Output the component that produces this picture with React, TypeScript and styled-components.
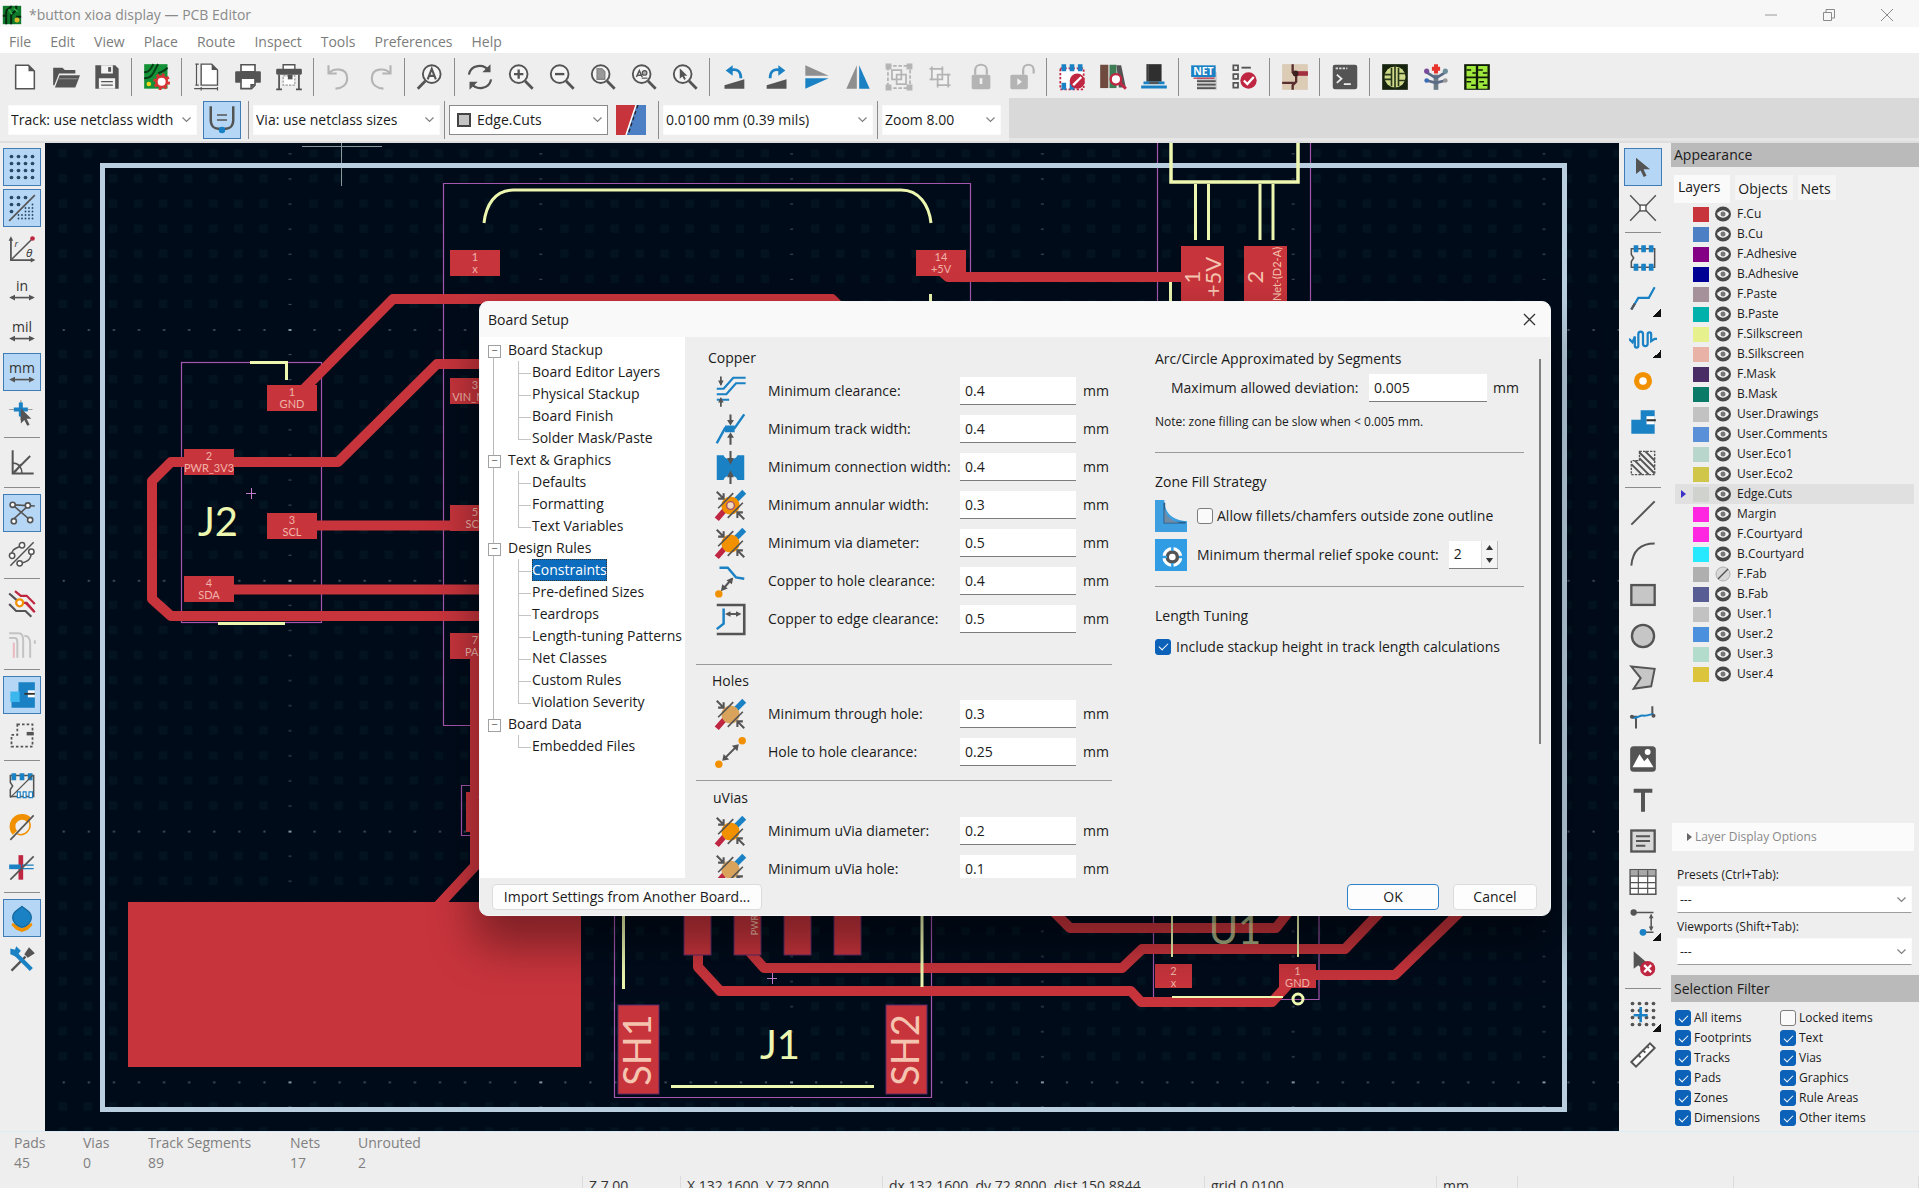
import React, { useState } from 'react';
import styled, { createGlobalStyle, css } from 'styled-components';

const D = '#545454';
const B = '#1a81c4';
const R = '#bf2641';
const O = '#f29100';
const G = '#b4b4b4';
const COPPER = '#c8343c';
const SILK = '#eef7b0';

const Global = createGlobalStyle`
  * { box-sizing: border-box; }
  html, body { margin: 0; height: 100%; overflow: hidden; }
  body { font-family: "Open Sans", "Noto Sans", sans-serif; font-size: 14px; line-height: 20px; color: #1b1b1b; background: #eeeeee; }
  #root { height: 100%; }
  button, input, select { font: inherit; color: inherit; margin: 0; }
`;

/* ---------- icons ---------- */

const Mag = ({ flip, children }: { flip?: boolean; children?: React.ReactNode }) => (
  <g fill="none" stroke={D}>
    <circle cx={flip ? 13.5 : 10} cy="9.5" r="7.6" strokeWidth="1.6" fill="#f5f5f5" />
    <path d={flip ? 'M8 15.5 1.5 22' : 'M15.5 15.5 22 22'} strokeWidth="2.4" />
    {children}
  </g>
);

const Via = ({ hole, plain }: { hole?: boolean; plain?: boolean }) => (
  <g>
    <path d="M2 22 9 14" stroke={R} strokeWidth="4" />
    <path d="M15 9 22 2" stroke={B} strokeWidth="4" />
    <circle cx="12" cy="12" r="6.6" fill={plain ? '#d9a35c' : O} />
    {hole && <circle cx="12" cy="12" r="2.8" fill="#f3d9bb" stroke="#a3506a" strokeWidth="1" />}
    <path d="M3 14 14 3M10 21 21 10" stroke={D} strokeWidth="1.2" />
    <path d="M2 2 7 7M7 3v4H3M22 22l-5-5M17 21v-4h4" stroke={D} strokeWidth="1.5" fill="none" />
  </g>
);

const dots = (xs: number[], ys: number[], r: number, c: string) =>
  xs.flatMap((x) => ys.map((y) => <circle key={`${x}-${y}`} cx={x} cy={y} r={r} fill={c} />));

const Fold = ({ children }: { children?: React.ReactNode }) => (
  <g>
    <path d="M4 2h11l5 5v15H4z" fill="#fff" stroke={D} strokeWidth="1.3" />
    <path d="M15 2v5h5z" fill={D} />
    {children}
  </g>
);

const Units = ({ label }: { label: string }) => (
  <g>
    <text x="12" y="13" fontSize="12" textAnchor="middle" fill="#333" fontFamily="Open Sans, sans-serif">{label}</text>
    <path d="M3 18.5h18" stroke={D} strokeWidth="1.4" />
    <path d="M1 18.5l5-2.4v4.8zM23 18.5l-5-2.4v4.8z" fill={D} />
  </g>
);

const icons: Record<string, React.ReactNode> = {
  new: <Fold />,
  open: <g fill={D}><path d="M1 4h8l2 2h9v3H6L2 19H1z" /><path d="M6.500 10.500H24L20 21H2.500z" /><path d="M5 13.500h17" stroke="#8a8a8a" /></g>,
  save: <g><path d="M2 2h17l3 3v17H2z" fill={D} /><path d="M7 2h10v7H7zM5 13h14v9H5z" fill="#f2f2f2" /><path d="M13 3.500h2.500v4H13z" fill={D} /><path d="M7 16h10M7 19h10" stroke={D} /></g>,
  pcb: <g><rect x="1" y="1" width="20" height="21" fill="#149237" /><path d="M1 8c6 0 6-5 8-7M1 13c8 0 8-6 12-12M13 9c3-2 6-2 8-5" stroke="#073d17" strokeWidth="1.700" fill="none" /><circle cx="5" cy="18" r="2" fill="#f3d51b" /><circle cx="16" cy="16" r="4.500" fill="#fff" stroke="#d83434" strokeWidth="2.200" /><circle cx="16" cy="16" r="6" fill="none" stroke="#d83434" strokeWidth="2.400" strokeDasharray="2.400 2.300" /></g>,
  page: <g><path d="M7 1h9l5 5v13H7z" fill="#fff" stroke={D} strokeWidth="1.200" /><path d="M16 1v5h5z" fill={D} /><path d="M3 1v18M1 22h20M2 1h3M2 19h3M7 20.500v3M21 20.500v3" stroke={D} /></g>,
  print: <g><path d="M6 1.500h12v6H6z" fill="#fff" stroke={D} strokeWidth="1.400" /><rect x="1" y="7" width="22" height="10" rx="1" fill={D} /><path d="M6 13h12v6l-3 3H6z" fill="#fff" stroke={D} strokeWidth="1.400" /><path d="M18 18h-4v4z" fill={D} /></g>,
  plot: <g><path d="M7 1.500h10v5H7z" fill="#fff" stroke={D} strokeWidth="1.200" /><rect x="1" y="5" width="22" height="5" rx="1" fill={D} /><path d="M3.500 10v12M20.500 10v12M1 22.500h5M18 22.500h5" stroke={D} strokeWidth="1.500" /><path d="M7 11h10v8H7z" fill="#fff" stroke="#999" strokeDasharray="2 1" /><path d="M11 10h4v4h-4z" fill={D} /></g>,
  undo: <path d="M3 2v7h7M3.500 8.500C7 4.500 19 3.500 19 13c0 6-5 9-10 9" fill="none" stroke={G} strokeWidth="1.800" />,
  redo: <path d="M21 2v7h-7M20.500 8.500C17 4.500 5 3.500 5 13c0 6 5 9 10 9" fill="none" stroke={G} strokeWidth="1.800" />,
  find: <Mag flip><path d="M10 14l3.500-9 3.500 9M11 11h5" strokeWidth="1.800" /></Mag>,
  refresh: <g fill="none" stroke={D} strokeWidth="1.900"><path d="M2.500 10C4 1.500 15 0 20 7M21.500 14C20 22.500 9 24 4 17" /><path d="M21 1v7h-7zM3 23v-7h7z" fill={D} stroke="none" /></g>,
  zin: <Mag><path d="M10 5.500v8M6 9.500h8" strokeWidth="2" /></Mag>,
  zout: <Mag><path d="M6 9.500h8" strokeWidth="2" /></Mag>,
  zfit: <Mag><path d="M7 5h4l2.500 2.500v6.500H7z" fill="#999" stroke="#888" strokeWidth="1.300" /></Mag>,
  zobj: <Mag><path d="M5.500 12 8 6.500l2.500 5.500M6.500 10.500h3" strokeWidth="1.300" /><circle cx="12.500" cy="8.500" r="2" fill="#aaa" /><path d="M10 13h5" /></Mag>,
  zsel: <Mag><path d="M7.500 4.500v9l2.200-2 1.800 3 1.200-1-1.500-2.500H14z" fill={D} stroke="none" /></Mag>,
  rotl: <g><path d="M3 22v-3l17-5v8z" fill={D} /><path d="M9 6c5-1 8 1 8 7" fill="none" stroke={B} strokeWidth="2.400" /><path d="M4 6.500 10 2v9z" fill={B} /></g>,
  rotr: <g><path d="M21 22v-8L4 19v3z" fill={D} /><path d="M15 6c-5-1-8 1-8 7" fill="none" stroke={B} strokeWidth="2.400" /><path d="M20 6.500 14 2v9z" fill={B} /></g>,
  flipv: <g><path d="M2 2v9h20z" fill="#8f8f8f" /><path d="M2 22v-9h20z" fill={B} /></g>,
  fliph: <g><path d="M2 22h9V2z" fill="#8f8f8f" /><path d="M22 22h-9V2z" fill={B} /></g>,
  group: <g fill="none" stroke={G}><rect x="2.500" y="2.500" width="19" height="19" strokeWidth="1.500" strokeDasharray="3 1.500" /><path d="M6 6h8v8H6zM10 10h8v8h-8z" strokeWidth="1.500" fill="#f2f2f2" /><path d="M1 1h4v4H1zM19 1h4v4h-4zM1 19h4v4H1zM19 19h4v4h-4z" fill={G} /></g>,
  ungroup: <g fill="none" stroke={G} strokeWidth="1.500"><path d="M5 5h9v9H5zM10 10h9v9h-9z" fill="#f2f2f2" /><path d="M3 5h3M5 3v3M14 3v3M3 14h3M19 18v3M18 19h3M10 18v3M18 10h3" /></g>,
  lock: <g><rect x="4" y="10" width="16" height="12.500" rx="1.500" fill={G} /><path d="M7 10V6c0-6 10-6 10 0v4" fill="none" stroke={G} strokeWidth="1.900" /><path d="M12 13v5" stroke="#f2f2f2" strokeWidth="2.200" /></g>,
  unlock: <g><rect x="2" y="10" width="15" height="12.500" rx="1.500" fill={G} /><path d="M13 10V6c0-6 9-6 9 0v3" fill="none" stroke={G} strokeWidth="1.900" /><path d="M8 13l4 3-4 3z" fill="#f2f2f2" /></g>,
  fpedit: <g><path d="M2 4.500h20v18H2z" fill="#fff" stroke={R} strokeWidth="1.500" strokeDasharray="2 1.500" /><path d="M3 1h4v6H3zM10 1h4v6h-4zM17 1h4v6h-4zM3 17h4v6H3zM10 17h4v6h-4z" fill={B} /><circle cx="16.500" cy="15.500" r="6.500" fill={R} /><path d="M13 19l7-7" stroke="#fff" strokeWidth="2" /></g>,
  fpview: <g><path d="M1 1.500h7v20H1z" fill="#6e4a3f" /><path d="M9 1.500h6v20H9z" fill="#3e7c55" /><path d="M15 2h4l4 19h-6z" fill={D} /><circle cx="14.500" cy="14" r="4.500" fill="#fff" stroke={R} strokeWidth="2" /><path d="M18 17l5 5" stroke={R} strokeWidth="2.500" /></g>,
  model: <g><path d="M5.500 1h13v15h-13z" fill="#2f2f2f" /><path d="M7 1v15" stroke="#555" /><path d="M3 17h18M1 20.500h22" stroke={B} strokeWidth="2.500" /><path d="M8 16h8v2H8z" fill={D} /></g>,
  net: <g><rect x="6" y="8" width="17" height="15" fill="#c9c9c9" /><path d="M1 2h21v10H1z" fill={B} /><text x="11.500" y="10.500" fontSize="9" fontWeight="700" textAnchor="middle" fill="#fff" fontFamily="Open Sans, sans-serif">NET</text><path d="M6 15.500h16M6 18.500h16M6 21.500h16" stroke={D} strokeWidth="1.500" /><path d="M3 13h18" stroke={R} /></g>,
  drc: <g fill="none"><path d="M2 2h4v4H2zM2 9.500h4v4H2zM2 17h4v4H2z" stroke={D} strokeWidth="1.500" /><path d="M9 4h8" stroke={D} strokeWidth="1.600" /><circle cx="15" cy="15" r="7" fill={R} /><path d="M11 15l3 3 5.500-6" stroke="#fff" strokeWidth="2" /></g>,
  sch: <g><rect x="1" y="1" width="22" height="22" fill="#dccbb5" /><path d="M10 1v7l3 2v6l-3 3v4M1 17h10M13 9h10" fill="none" stroke="#5a2e2e" strokeWidth="2" /><path d="M14 7h9v4h-9z" fill="#a3303f" /><circle cx="12.500" cy="9" r="2.500" fill="#3b2020" /></g>,
  console: <g><rect x="1.500" y="1.500" width="21" height="21" rx="2" fill={D} /><path d="M4 4.500h10" stroke="#ddd" strokeWidth="1.500" strokeDasharray="2 1" /><path d="M5 10l4 3.500L5 17M11 18h6" stroke="#eee" strokeWidth="1.500" fill="none" /></g>,
  bid: <g><rect x="1" y="1" width="22" height="22" fill="#16230f" /><circle cx="12" cy="12" r="9" fill="#cfd98a" /><path d="M12 2v20M9 4v16M15 4v16M3 10h6M3 14h6M15 9h6M15 15h6" stroke="#27381b" strokeWidth="1.400" /></g>,
  tree: <g><path d="M12 10v13" stroke="#6b7c86" strokeWidth="4" /><path d="M12 13 4 8M12 13l8-5M12 17l-8-2M12 17l8-2" stroke="#5b6b86" strokeWidth="2.400" /><path d="M12 1v8M8.500 5h7" stroke="#e8322c" strokeWidth="3.400" /><circle cx="4" cy="7" r="2.200" fill="#7a4a9a" /><circle cx="20" cy="7" r="2.200" fill="#6c8d9a" /><circle cx="4" cy="15" r="2" fill="#3a6cb4" /><circle cx="20" cy="15" r="2" fill="#999" /></g>,
  panel: <g><path d="M1 1h22v22H1z" fill="#0f1a08" /><path d="M3 2.500h8v9H3zM13 2.500h8v9h-8zM3 13h8v9H3zM13 13h8v9h-8z" fill="#9fe83c" /><path d="M3 6h4M8 8.500h3M13 6h4M17 8.500h4M3 16h4M7 19h4M14 16h4M17 19h4" stroke="#0f1a08" strokeWidth="1.300" /></g>,
  netwidth: <g fill="none"><path d="M3 1v11c0 5 3 7 6 7h6c3 0 6-2 6-7V1" stroke={D} strokeWidth="2" /><path d="M8 8h8M8 12h8" stroke={D} strokeWidth="1.200" /><circle cx="12" cy="20" r="2.600" fill={B} /></g>,
  layerpair: <g><path d="M0 0h24v24H0z" fill={COPPER} /><path d="M16 0h8v24H8z" fill="#4d7fc4" /><path d="M16 0 8 24" stroke="#fff" strokeWidth="1.200" /><path d="M17.500 0 9.500 24" stroke="#222" strokeWidth="1" strokeDasharray="3 2" /></g>,
  grid: <g>{dots([3, 9, 15, 21], [3, 9, 15, 21], 1.6, '#2c4a66')}</g>,
  gridov: <g>{dots([3, 9, 15], [3], 1.6, '#2c4a66')}{dots([3, 9], [9], 1.6, '#2c4a66')}{dots([3], [15], 1.6, '#2c4a66')}{dots([9, 12, 15, 18, 21], [18, 21], 0.8, '#2c4a66')}{dots([15, 18, 21], [12, 15], 0.8, '#2c4a66')}{dots([21], [9], 0.8, '#2c4a66')}<path d="M1 23 23 1" stroke={D} strokeWidth="1.400" /></g>,
  polar: <g fill="none" stroke={D}><path d="M2.500 3v18.500H21" strokeWidth="1.500" /><path d="M2.500 1 .5 5h4zM23.500 21.500l-4-2v4z" fill={D} stroke="none" /><path d="M3 21 20 4" strokeWidth="1.300" /><circle cx="21" cy="3" r="2" fill={R} stroke="none" /><text x="15.500" y="19" fontSize="10" fontStyle="italic" fill="#333" stroke="none" fontFamily="Open Sans, sans-serif">θ</text><text x="5.500" y="10" fontSize="8" fontStyle="italic" fill="#333" stroke="none" fontFamily="Open Sans, sans-serif">r</text></g>,
  inch: <Units label="in" />,
  mil: <Units label="mil" />,
  mm: <Units label="mm" />,
  cursor: <g><path d="M1 9h20M11 1v17" stroke="#9a9a9a" /><path d="M11 3v12M5 9h12" stroke={B} strokeWidth="3.400" /><path d="M11 8v13l3-3 2.500 5 2-1-2.500-5h4z" fill={D} /></g>,
  angle: <g fill="none" stroke={D}><path d="M4 1v20H22" strokeWidth="1.700" /><path d="M4 21 19 6" strokeWidth="1.600" /><path d="M4 12c5 0 8 4 8 9M6 20l5-7" strokeWidth="1.300" /></g>,
  rats: <g fill="#fff" stroke={D} strokeWidth="1.400"><path d="M5 6 19 18M4 18 17 6M5 5l18 1" /><circle cx="4" cy="5" r="2.200" /><circle cx="17" cy="5.500" r="2.200" /><circle cx="5" cy="19" r="2.200" /><circle cx="19" cy="18" r="2.200" /></g>,
  ratc: <g fill="#fff" stroke={D} strokeWidth="1.300"><path d="M2 22 22 2" /><path d="M3 14c0-8 5-6 9-10M20 10c0 8-5 9-9 10" fill="none" /><circle cx="3.500" cy="13.500" r="2.300" /><circle cx="12" cy="4.500" r="2.300" /><circle cx="20" cy="10" r="2.300" /><circle cx="10" cy="20" r="2.300" /></g>,
  netcol: <g fill="none" strokeWidth="1.900"><path d="M6 1l5 4h5l7 7M15 11l8 8" stroke={R} /><path d="M1 3l8 7M1 12l6 6h8l5 5" stroke={D} /><path d="M10 11h6l6 7" stroke={R} /><circle cx="10" cy="11" r="3" fill="#fff" stroke={O} /></g>,
  highlight: <g fill="none" stroke="#c3c3c3" strokeWidth="1.700"><path d="M1 2h8c4 0 4 4 4 7v14M1 6h5c2 0 2 2 2 5v12M14 4c4 0 5 3 5 7v12M23 8v3" /><path d="M5 10v13" stroke="#eab9c0" /></g>,
  zone: <g><path d="M9 1h14v22H3V10h6z" fill={B} /><path d="M2 9h8v9H2z" fill="#3cb7ee" /><path d="M23 8h-6v6h6z" fill="#fff" /><path d="M14 11h9" stroke="#333" strokeWidth="1.600" /></g>,
  zoneout: <g><path d="M8 2h13v19H3V11h5z" fill="none" stroke={D} strokeWidth="1.500" strokeDasharray="2.200 1.800" /><path d="M16 10h6" stroke={D} strokeWidth="3" /></g>,
  padskt: <g fill="none"><path d="M2 3h20v18H2V15l2-3-2-3z" stroke={D} strokeWidth="1.300" /><path d="M3 1h4v6H3zM10 1h4v6h-4zM17 1h4v6h-4z" fill={B} /><path d="M8 17h2.500v5H8zM13 17h2.500v5H13zM18 17h3v5h-3z" stroke={B} fill="#fff" /><path d="M2 22 21 3" stroke={D} /></g>,
  viaskt: <g fill="none"><path d="M6 17A8 8 0 1 1 18 6" stroke={O} strokeWidth="5" /><path d="M18 7a8 8 0 0 1-10 11" stroke={O} strokeWidth="1.300" /><path d="M2 23 22 2" stroke={D} strokeWidth="1.400" /></g>,
  trkskt: <g fill="none"><path d="M11 1v21" stroke={R} strokeWidth="4" /><path d="M1 11h10" stroke={B} strokeWidth="4" /><path d="M12 9.500h10M12 12.500h10" stroke={B} /><path d="M2 22 22 2" stroke={D} strokeWidth="1.400" /></g>,
  contrast: <g><path d="M4 16l8 5 8-5 1 2-4 4-5 2-5-2-4-4z" fill={O} /><path d="M12 2c5 4 8 5 8 10 0 4-4 7-8 8-4-1-8-4-8-8 0-5 3-6 8-10z" fill={B} stroke="#14679c" /></g>,
  tools: <g><path d="M3 22 15 10" stroke={D} strokeWidth="2" /><path d="M14 8l4-6 5 5-6 4z" fill={D} /><path d="M6 7l14 14" stroke={B} strokeWidth="3.600" /><path d="M2 3l4 1 1-3 4 4-4 5-5-2z" fill={B} /></g>,
  select: <path d="M6 4v14l4-3 2.500 5.500 2.500-1-2.500-5.500H18z" fill={D} />,
  local: <g fill="none" stroke={D} strokeWidth="1.200"><path d="M1 1l9 9.500M14 10.500l9-9.500M1 23l9-9.500M14 13.500l9 9.500" /><rect x="9.500" y="9.500" width="5" height="5" fill="#fff" /></g>,
  fp: <g fill="none"><path d="M2 4h20v16H2v-5l2-3-2-3z" stroke={D} strokeWidth="1.300" /><path d="M4 1h4v6H4zM10.500 1h4v6h-4zM17 1h4v6h-4zM4 17h4v6H4zM10.500 17h4v6h-4zM17 17h4v6h-4z" fill={B} /></g>,
  route: <g fill="none"><path d="M2 21 8 11h9l5-9" stroke={B} strokeWidth="1.900" /><path d="M2 21l3-5" stroke={D} strokeWidth="2" /></g>,
  tune: <path d="M0 11l3 3 2-5v8c0 2 3 2 3 0V7c0-3 4-3 4 0v8c0 3 4 3 4 0V7c0-2 3-2 3 0v6l3-2h2" fill="none" stroke={B} strokeWidth="1.900" />,
  via: <circle cx="12" cy="12" r="5.500" fill="#fff" stroke={O} strokeWidth="4.500" />,
  addzone: <g><path d="M10 2h12v20H2V10h8z" fill={B} /><path d="M22 7h-7v7h7z" fill="#fff" /><path d="M15 10.500h8" stroke="#333" strokeWidth="1.800" /></g>,
  rule: <g fill="none" stroke={D} strokeWidth="1.700"><path d="M9 2h13v20H2V10h7z" strokeWidth="1.200" strokeDasharray="2 1" /><path d="M9 3l13 13M14 2l8 8M5 10l12 12M2 13l9 9M9 8l13 13" /></g>,
  line: <path d="M2 22 22 2" stroke={D} strokeWidth="1.700" />,
  arc: <path d="M2 22C3 10 9 3 22 3" fill="none" stroke={D} strokeWidth="1.700" />,
  rect: <rect x="2" y="3.500" width="20" height="17" fill="#c6c6c6" stroke={D} strokeWidth="2" />,
  circle: <circle cx="12" cy="12" r="9.500" fill="#c6c6c6" stroke={D} strokeWidth="2" />,
  poly: <path d="M2 3l20 2-3 15-15 2 6-9z" fill="#c6c6c6" stroke={D} strokeWidth="1.700" />,
  bezier: <g fill="none"><path d="M2 11h5M20 9V2M6 12v9" stroke={D} strokeWidth="1.700" /><path d="M3 12c7 0 5-3 10-2 5 0 6-2 8-1" stroke={B} strokeWidth="1.700" /><circle cx="2.500" cy="11" r="1.700" fill={D} /><circle cx="21" cy="10" r="1.700" fill={D} /></g>,
  image: <g><rect x="1" y="1" width="22" height="22" rx="3" fill={D} /><path d="M3 19 9 8l4 6 3-3 5 8z" fill="#fff" /><circle cx="16" cy="6" r="2.500" fill="#fff" /></g>,
  text: <path d="M4 4h16M12 4v18" fill="none" stroke={D} strokeWidth="3.400" />,
  textbox: <g fill="none" stroke={D}><rect x="2" y="3" width="20" height="18" strokeWidth="2" fill="#d8d8d8" /><path d="M6 8h12M6 12h12M6 16h8" strokeWidth="1.700" /></g>,
  table: <g fill="none" stroke={D}><rect x="1" y="1.500" width="22" height="21" strokeWidth="1.300" fill="#fff" /><path d="M1.500 2h21v5h-21z" fill="#a8a8a8" stroke="none" /><path d="M1 7h22M1 12.500h22M1 17.500h22M8 2v20M16 2v20" /></g>,
  dim: <g fill="none" stroke={D}><path d="M4 3h17M13 20h8M19 5v13" strokeWidth="1.300" /><path d="M19 4l2 4h-4zM19 19l2-4h-4z" fill={D} stroke="none" /><circle cx="4" cy="3" r="2.700" fill={D} stroke="none" /><circle cx="12" cy="20" r="2.900" fill={B} stroke="none" /></g>,
  del: <g><path d="M4 1v15l4-3 8 8 2-8z" fill={D} /><circle cx="16" cy="16" r="6.500" fill={R} /><path d="M13 13l6 6M19 13l-6 6" stroke="#fff" strokeWidth="2" /></g>,
  origin: <g>{dots([3, 9, 15, 21], [3, 9, 15, 21], 1.6, D)}<path d="M10 6v13M4 13h12" stroke={B} strokeWidth="2.200" /></g>,
  ruler: <g fill="#fff" stroke={D} strokeWidth="1.700"><path d="M2 18 18 2l4 4L6 22z" /><path d="M8 12l2 2M12 8l2 2M16 5l1 1" /></g>,
  clearance: <g fill="none"><path d="M2 10h5l7-8h9M2 14h7l7-8h7M2 18h9" stroke={B} strokeWidth="1.600" /><path d="M5 1v6M5 17v6" stroke={D} strokeWidth="1.300" /><path d="M5 8 3 4h4zM5 16l-2 4h4z" fill={D} /></g>,
  trackw: <g fill="none"><path d="M2 22 8 11h7l7-10" stroke={B} strokeWidth="1.800" /><path d="M8 9h7v5H8z" fill={B} /><path d="M12 1v5M12 23v-6" stroke={D} strokeWidth="1.500" /><path d="M12 9l-2.500-4h5zM12 14l-2.500 4h5z" fill={D} /></g>,
  connw: <g><path d="M2 3h5c1 4 9 4 10 0h5v18h-5c-1-4-9-4-10 0H2z" fill={B} /><path d="M12 0v6M12 24v-6" stroke={D} strokeWidth="1.500" /><path d="M12 10 9.500 5h5zM12 14l-2.500 5h5z" fill={D} /></g>,
  annular: <Via hole />,
  viadia: <Via />,
  hole: <Via plain />,
  cuhole: <g fill="none"><path d="M4 2h6l6 7 6 1" stroke={B} strokeWidth="1.700" /><path d="M7 17l6-7" stroke={D} strokeWidth="1.500" /><path d="M14 9l-1 5-4-3zM5 19l1-5 4 3z" fill={D} /><circle cx="3.500" cy="21" r="2.700" fill={O} /></g>,
  cuedge: <g fill="none"><path d="M2 1.500h20v21H2" stroke={D} strokeWidth="1.900" /><path d="M7 4v11l-5 4" stroke={B} strokeWidth="1.800" /><path d="M10 8h8" stroke={D} strokeWidth="1.400" /><path d="M8 8l4-2v4zM20 8l-4-2v4z" fill={D} /></g>,
  holehole: <g fill="none"><path d="M7 17 17 7" stroke={D} strokeWidth="1.500" /><path d="M18 6l-1 5-4-4zM6 18l1-5 4 4z" fill={D} /><circle cx="3.500" cy="20.500" r="2.700" fill={O} /><circle cx="20.500" cy="3.500" r="2.700" fill={O} /></g>,
  fillet: <g><path d="M0 0h7c0 10 6 15 17 16v8H0z" fill="#3d9fe0" /><path d="M7 2v15h16" fill="none" stroke="#2b5b86" strokeWidth="1.300" /><path d="M7 6c1 6 5 10 12 11H7z" fill="#6f8ba6" /></g>,
  thermal: <g><path d="M0 0h24v24H0z" fill="#2f9ce4" /><circle cx="13" cy="13.500" r="7.500" fill="#fff" /><circle cx="13" cy="13.500" r="3.800" fill="#fff" stroke={D} strokeWidth="2.600" /><path d="M13 5v4M13 18v4M5 13.500h4M18 13.500h4" stroke="#2f9ce4" strokeWidth="1.800" /></g>,
};

const flyouts = new Set(['route', 'tune', 'dim', 'origin']);

const Icon = ({ name, size = 28 }: { name: string; size?: number }) => (
  <svg width={size} height={size} viewBox="0 0 24 24" aria-hidden="true">{icons[name]}</svg>
);

/* ---------- window frame ---------- */

const Window = styled.div`
  height: 100vh;
  display: flex;
  flex-direction: column;
  overflow: hidden;
  position: relative;
`;

const TitleBar = styled.header`
  height: 27px;
  flex: none;
  display: flex;
  align-items: center;
  gap: 7px;
  padding: 2px 25px 0 2px;
  background: #f7f7f7;
  color: #8a8a8a;
`;

const WindowButtons = styled.div`
  margin-left: auto;
  display: flex;
  gap: 44px;
`;

const PlainButton = styled.button`
  border: 0;
  padding: 0;
  background: none;
  display: flex;
`;

const MenuBar = styled.nav`
  height: 26px;
  flex: none;
  display: flex;
  align-items: center;
  gap: 19px;
  padding: 4px 9px 0;
  background: #fff;
  color: #7c7c7c;
`;

const ToolBar = styled.div`
  height: 45px;
  flex: none;
  display: flex;
  align-items: center;
  padding: 2px 4px 0;
`;

const SideBar = styled.div<{ $width: number }>`
  width: ${(p) => p.$width}px;
  flex: none;
  display: flex;
  flex-direction: column;
  align-items: center;
  padding: 3px 2px 0 0;
`;

const Slot = styled.div`
  width: 41px;
  height: 41px;
  flex: none;
  display: flex;
  align-items: center;
  justify-content: center;
`;

const ToolButton = styled.button<{ $on?: boolean; $fly?: boolean }>`
  width: 38px;
  height: 38px;
  padding: 0;
  display: flex;
  align-items: center;
  justify-content: center;
  background: ${(p) => (p.$on ? '#b5d7f5' : 'transparent')};
  border: 1px solid ${(p) => (p.$on ? '#3f7bb5' : 'transparent')};
  ${(p) => p.$fly && css`
    background: linear-gradient(135deg, transparent 50%, #111 50%) right bottom / 8px 8px no-repeat;
  `}
`;

const VSep = styled.div`
  width: 1px;
  height: 38px;
  margin: 0 4px;
  flex: none;
  background: #8c8c8c;
`;

const HSep = styled.div`
  width: 36px;
  height: 1px;
  margin: 4px 0;
  flex: none;
  background: #8c8c8c;
`;

const Tools = ({ names, on = [], vertical }: { names: string; on?: string[]; vertical?: boolean }) => (
  <>
    {names.split(' ').map((n, i) =>
      n === '|' ? (
        vertical ? <HSep key={i} /> : <VSep key={i} />
      ) : (
        <Slot key={i}>
          <ToolButton type="button" aria-label={n} $on={on.includes(n)} $fly={flyouts.has(n)}>
            <Icon name={n} />
          </ToolButton>
        </Slot>
      ),
    )}
  </>
);

const AuxBar = styled.div`
  height: 45px;
  flex: none;
  display: flex;
  align-items: center;
  padding-left: 8px;
  border-bottom: 2px solid #dedede;
`;

const AuxFiller = styled.div`
  flex: 1;
  height: 100%;
  margin-left: 8px;
  background: #d9d9d9;
  border-bottom: 3px solid #e6e6e6;
`;

const SelectBox = styled.div<{ $width?: number; $framed?: boolean }>`
  position: relative;
  width: ${(p) => (p.$width ? `${p.$width}px` : '100%')};
  height: ${(p) => (p.$width ? 30 : 27)}px;
  background: #fff;
  border: 1px solid ${(p) => (p.$framed ? '#8a8a8a' : '#fafafa')};
  border-bottom-color: ${(p) => (p.$width ? '' : '#9d9d9d')};
  select {
    width: 100%;
    height: 100%;
    appearance: none;
    border: 0;
    background: transparent;
    padding: 0 20px 0 ${(p) => (p.$framed ? 27 : 2)}px;
    outline: 0;
  }
`;

const Chevron = styled.svg`
  position: absolute;
  right: 5px;
  top: 50%;
  margin-top: -3px;
  pointer-events: none;
`;

const LayerChip = styled.span`
  position: absolute;
  left: 7px;
  top: 7px;
  width: 14px;
  height: 14px;
  background: #c4c4c4;
  border: 2px solid #444;
`;

const Select = ({ label, value, width, chip }: { label: string; value: string; width?: number; chip?: boolean }) => (
  <SelectBox $width={width} $framed={chip}>
    {chip && <LayerChip />}
    <select aria-label={label} defaultValue={value}>
      <option>{value}</option>
    </select>
    <Chevron width="9" height="6" viewBox="0 0 9 6"><path d="M.5.5l4 4 4-4" fill="none" stroke="#808080" strokeWidth="1.200" /></Chevron>
  </SelectBox>
);

const ToggleButton = styled(ToolButton)`
  margin: 0 3px 0 6px;
  background: #b5d7f5;
  border-color: #3f7bb5;
`;

const PairButton = styled(PlainButton)`
  margin: 0 8px;
`;

const Main = styled.main`
  flex: 1;
  min-height: 0;
  display: flex;
`;

const Canvas = styled.div`
  flex: 1;
  min-width: 0;
  background: #000b1a;
  svg { display: block; width: 100%; height: 100%; }
`;

/* ---------- board drawing ---------- */

const steps = [1, 2, 3, 4, 5, 6, 7, 8, 9];
const pitch = 25.08;

type PadProps = { x: number; y: number; w?: number; h?: number; n?: string; net?: string; edge?: boolean };
const Pad = ({ x, y, w = 50, h = 26, n, net, edge }: PadProps) => (
  <g fill="#f0b3a8" fontSize="11" textAnchor="middle">
    <rect x={x} y={y} width={w} height={h} fill={COPPER} stroke={edge ? '#5a2a6a' : 'none'} />
    <text x={x + w / 2} y={y + 11}>{n}</text>
    <text x={x + w / 2} y={y + 23}>{net}</text>
  </g>
);

const Vert = ({ x, y, size, children, fill = '#f5c4b0' }: { x: number; y: number; size: number; children: string; fill?: string }) => (
  <text x={x} y={y} transform={`rotate(-90 ${x} ${y})`} fontSize={size} textAnchor="middle" fill={fill}>{children}</text>
);

const Board = () => (
  <svg viewBox="45 143 1574 988" preserveAspectRatio="xMinYMin slice" fontFamily="Lato, Open Sans, sans-serif">
    <defs>
      <pattern id="grid" x="288.500" y="329" width="250.800" height="250.800" patternUnits="userSpaceOnUse">
        {steps.flatMap((i) => steps.map((j) => (
          <rect key={`${i}.${j}`} x={i * pitch - 4} y={j * pitch - 4} width="8" height="8" fill="#031420" />
        )))}
        {steps.map((i) => (
          <g key={i} fill="#41525c">
            <rect x={i * pitch} y="0" width="2" height="2" />
            <rect x="0" y={i * pitch} width="3" height="1" />
          </g>
        ))}
        <rect width="3" height="2" fill="#7f939d" />
      </pattern>
    </defs>
    <rect x="45" y="143" width="2400" height="1600" fill="url(#grid)" />
    <g fill="none" stroke="#8c979c">
      <path d="M302 146.500H382M341.500 143V186" />
    </g>

    <g fill="none" stroke="#a557ad" strokeWidth="1.200">
      <rect x="181.500" y="362.500" width="140" height="260" />
      <path d="M443.500 725.500V183.500H970.500V310M443 725.500h50" />
      <path d="M1157.500 143V310M1310.500 143V310" />
      <path d="M614.500 910V1097.500H931.500V910" />
      <path d="M1153.500 910V999.500H1319V910" />
      <path d="M490 785.500H461.500V835.500H490" />
    </g>

    <g fill="none" stroke="#b9cfe0" strokeWidth="5">
      <rect x="102.500" y="165.500" width="1462" height="944" />
    </g>

    <g fill="none" stroke={COPPER} strokeWidth="10" strokeLinejoin="round" strokeLinecap="round">
      <path d="M305 388 393 299H832L850 317" />
      <path d="M210 462H338L437 364H490" />
      <path d="M210 462H171L152 481V599L171 616H490" />
      <path d="M300 525.500H490M220 589.500H490" />
      <path d="M940 270l8 7H1190" />
      <path d="M475 650V866L436 908" />
      <path d="M698 950V967L720 991H1131L1141 1002H1272L1294 978" />
      <path d="M748 950L764 968H1122L1142 949H1345L1382 910" />
      <path d="M1052 910 1070 928H1276L1290 910" />
      <path d="M1310 975H1395L1462 910" />
    </g>

    <rect x="128" y="902" width="453" height="165" fill={COPPER} />

    <Pad x={267} y={385} n="1" net="GND" />
    <Pad x={184} y={449} n="2" net="PWR_3V3" />
    <Pad x={267} y={513} n="3" net="SCL" />
    <Pad x={184} y={576} n="4" net="SDA" />
    <Pad x={450} y={250} n="1" net="x" />
    <Pad x={450} y={378} n="3" net="VIN_MID" />
    <Pad x={450} y={505} n="5" net="SCL" />
    <Pad x={450} y={633} n="7" net="PA7" />
    <Pad x={916} y={250} n="14" net="+5V" />
    <Pad x={466} y={792} w={30} h={40} n="1" />
    <Pad x={1181} y={246} w={43} h={80} />
    <Pad x={1244} y={246} w={43} h={80} />
    <Vert x={1200} y={277} size={22}>1</Vert>
    <Vert x={1221} y={277} size={22}>+5V</Vert>
    <Vert x={1263} y={277} size={22}>2</Vert>
    <Vert x={1281} y={274} size={11}>Net-(D2-A)</Vert>
    <Pad x={684} y={900} w={27} h={55} edge />
    <Pad x={734} y={900} w={27} h={55} edge />
    <Pad x={784} y={900} w={27} h={55} edge />
    <Pad x={834} y={900} w={27} h={55} edge />
    <Vert x={758} y={925} size={9}>PWR</Vert>
    <Pad x={618} y={1005} w={41} h={89} edge />
    <Pad x={886} y={1005} w={41} h={89} edge />
    <Vert x={651} y={1050} size={38}>SH1</Vert>
    <Vert x={919} y={1050} size={38}>SH2</Vert>
    <Pad x={1155} y={964} w={37} h={24} n="2" net="x" />
    <Pad x={1279} y={964} w={37} h={24} n="1" net="GND" />

    <g fill="none" stroke={SILK} strokeWidth="3">
      <path d="M250 362.500H286.500V380M218 623.500H285" />
      <path d="M484 223C486 205 495 190 513 190H901C919 190 929 205 931 223M930.500 294V305" />
      <path d="M1171 143V182H1298V143" strokeWidth="3.500" />
      <path d="M1195.500 184V240M1208.500 184V240M1260 184V240M1273 184V240M1170.500 282V305" />
      <path d="M623.500 910V989M922 910V987M671 1086.500H874" />
      <path d="M1172 910V957M1298 910V957M1172 997H1283" strokeWidth="2" />
      <circle cx="1298" cy="999" r="5" />
    </g>
    <g fill={SILK} textAnchor="middle" fontSize="40">
      <text x="218" y="536">J2</text>
      <text x="780" y="1059">J1</text>
      <text x="1235" y="944" fillOpacity="0.7">U1</text>
    </g>
    <path d="M246 493.500h10M251.500 488v11M767 978.500h10M772.500 973v11" stroke="#c47ac9" fill="none" />
  </svg>
);

/* ---------- appearance panel ---------- */

const Panel = styled.aside`
  width: 251px;
  flex: none;
  display: flex;
  flex-direction: column;
  padding-left: 3px;
`;

const PanelHead = styled.h2<{ $tall?: boolean }>`
  margin: 0;
  height: ${(p) => (p.$tall ? 27 : 24)}px;
  line-height: ${(p) => (p.$tall ? 27 : 24)}px;
  padding-left: 3px;
  font-size: 14px;
  font-weight: 400;
  background: #bababa;
`;

const TabRow = styled.div`
  display: flex;
  align-items: flex-start;
  gap: 5px;
  padding: 8px 3px 0;
  height: 36px;
`;

const Tab = styled.button<{ $on?: boolean }>`
  border: 0;
  padding: ${(p) => (p.$on ? '2px 10px 6px 4px' : '4px 5px 1px 3px')};
  background: ${(p) => (p.$on ? '#fafafa' : '#f5f5f5')};
`;

const LayerList = styled.ul`
  list-style: none;
  margin: 0;
  padding: 1px 5px 0 4px;
  flex: 1;
  min-height: 0;
  overflow: hidden;
  font-size: 12px;
`;

const LayerRow = styled.li<{ $on?: boolean }>`
  height: 20px;
  display: grid;
  grid-template-columns: 13px 16px 18px 1fr;
  align-items: center;
  column-gap: 5px;
  background: ${(p) => (p.$on ? '#e0e0e0' : 'transparent')};
`;

const Swatch = styled.span<{ $color: string }>`
  width: 16px;
  height: 15px;
  background: ${(p) => p.$color};
`;

const Eye = ({ off }: { off?: boolean }) => (
  <svg width="18" height="16" viewBox="0 0 18 16" aria-hidden="true">
    {off ? (
      <><ellipse cx="9" cy="8" rx="7" ry="7" fill="#d8d8d8" stroke="#b0b0b0" /><path d="M4 13 14 3" stroke={D} strokeWidth="1.500" /></>
    ) : (
      <><ellipse cx="9" cy="8" rx="8" ry="7.500" fill="#484848" /><path d="M3 8c3-5 9-5 12 0-3 5-9 5-12 0z" fill="#f4f4f4" /><circle cx="9" cy="8" r="2.500" fill="#777" /></>
    )}
  </svg>
);

const layers: [string, string][] = [
  ['F.Cu', '#c8343c'], ['B.Cu', '#4d7fc4'], ['F.Adhesive', '#840084'], ['B.Adhesive', '#000094'],
  ['F.Paste', '#a4919a'], ['B.Paste', '#00b0aa'], ['F.Silkscreen', '#e6f08c'], ['B.Silkscreen', '#e8b2a7'],
  ['F.Mask', '#4b2d66'], ['B.Mask', '#0b7a66'], ['User.Drawings', '#c2c2c2'], ['User.Comments', '#5a90d8'],
  ['User.Eco1', '#b9d6cc'], ['User.Eco2', '#cfc64a'], ['Edge.Cuts', '#d0d2cd'], ['Margin', '#ff26e2'],
  ['F.Courtyard', '#ff26e2'], ['B.Courtyard', '#26e9ff'], ['F.Fab', '#afafaf'], ['B.Fab', '#585d94'],
  ['User.1', '#c2c2c2'], ['User.2', '#4a90dc'], ['User.3', '#b4dccd'], ['User.4', '#dcc53c'],
];

const DisplayOptions = styled.button`
  height: 28px;
  margin: 0 5px 0 1px;
  border: 0;
  padding: 0 0 0 15px;
  background: #fbfbfb;
  color: #8a8a8a;
  font-size: 12px;
  display: flex;
  align-items: center;
  gap: 3px;
`;

const Fields = styled.div`
  padding: 14px 7px 7px 6px;
  display: grid;
  row-gap: 1px;
  font-size: 12px;
  label { display: grid; row-gap: 1px; margin-bottom: 3px; }
`;

const FilterGrid = styled.div`
  padding: 6px 4px 3px;
  display: grid;
  grid-template-columns: 105px 1fr;
  font-size: 12px;
`;

const CheckLabel = styled.label<{ $gap?: number }>`
  display: flex;
  align-items: center;
  gap: ${(p) => p.$gap ?? 3}px;
  height: 20px;
  input {
    appearance: none;
    width: 16px;
    height: 16px;
    flex: none;
    border: 1px solid #7d7d7d;
    border-radius: 3px;
    background: #fafafa;
    display: grid;
    place-content: center;
  }
  input:checked { background: #0b62b8; border-color: #0b62b8; }
  input:checked::before {
    content: '';
    width: 8px;
    height: 4px;
    margin-top: -2px;
    border: solid #fff;
    border-width: 0 0 1px 1px;
    transform: rotate(-45deg);
  }
`;

const Check = ({ text, checked, gap }: { text: string; checked?: boolean; gap?: number }) => {
  const [on, setOn] = useState(!!checked);
  return (
    <CheckLabel $gap={gap}>
      <input type="checkbox" checked={on} onChange={(e) => setOn(e.target.checked)} />
      {text}
    </CheckLabel>
  );
};

const filters: [string, boolean][] = [
  ['All items', true], ['Locked items', false], ['Footprints', true], ['Text', true], ['Tracks', true], ['Vias', true],
  ['Pads', true], ['Graphics', true], ['Zones', true], ['Rule Areas', true], ['Dimensions', true], ['Other items', true],
];

const Appearance = () => (
  <Panel>
    <PanelHead>Appearance</PanelHead>
    <TabRow>
      <Tab type="button" $on>Layers</Tab>
      <Tab type="button">Objects</Tab>
      <Tab type="button">Nets</Tab>
    </TabRow>
    <LayerList>
      {layers.map(([name, color]) => (
        <LayerRow key={name} $on={name === 'Edge.Cuts'}>
          <svg width="13" height="10" aria-hidden="true">{name === 'Edge.Cuts' && <path d="M6 1v8l5-4z" fill="#3b30c8" />}</svg>
          <Swatch $color={color} />
          <Eye off={name === 'F.Fab'} />
          <span>{name}</span>
        </LayerRow>
      ))}
    </LayerList>
    <DisplayOptions type="button">
      <svg width="5" height="8" aria-hidden="true"><path d="M0 0v8l5-4z" fill="#666" /></svg>
      Layer Display Options
    </DisplayOptions>
    <Fields>
      <label>Presets (Ctrl+Tab):<Select label="Presets" value="---" /></label>
      <label>Viewports (Shift+Tab):<Select label="Viewports" value="---" /></label>
    </Fields>
    <PanelHead $tall>Selection Filter</PanelHead>
    <FilterGrid>
      {filters.map(([text, on]) => <Check key={text} text={text} checked={on} />)}
    </FilterGrid>
  </Panel>
);

/* ---------- message and status bars ---------- */

const MessagePanel = styled.dl`
  margin: 0;
  height: 45px;
  flex: none;
  display: grid;
  grid-template-columns: 69px 65px 142px 68px 1fr;
  padding: 1px 14px;
  color: #808080;
  border-top: 1px solid #dceaf4;
  dt, dd { margin: 0; line-height: 20px; }
`;

const StatusBar = styled.footer`
  height: 12px;
  flex: none;
  overflow: hidden;
  display: grid;
  grid-template-columns: 583px 98px 202px 322px 232px 81px 216px 1fr;
  color: #333;
  white-space: pre;
  span { padding-left: 6px; height: 20px; border-right: 1px solid #dcdcdc; }
`;

/* ---------- board setup dialog ---------- */

const Dialog = styled.section`
  position: absolute;
  left: 479px;
  top: 301px;
  width: 1072px;
  display: flex;
  flex-direction: column;
  background: #eeeeee;
  border: 1px solid #f4f6f8;
  border-radius: 9px;
  overflow: hidden;
  box-shadow: 0 26px 46px 4px rgba(0, 0, 0, 0.38);
`;

const DialogTitle = styled.div`
  height: 35px;
  flex: none;
  display: flex;
  align-items: center;
  justify-content: space-between;
  padding: 0 14px 0 8px;
  background: #f9f9f9;
`;

const DialogBody = styled.div`
  height: 541px;
  display: flex;
`;

const Tree = styled.ul`
  list-style: none;
  margin: 0;
  padding: 2px 0 0 28px;
  width: 205px;
  flex: none;
  background: #fff;
  white-space: nowrap;
  ul { list-style: none; margin: 0; padding: 0 0 0 24px; }
`;

const Branch = styled.li`
  position: relative;
  line-height: 22px;
  &::before {
    content: '−';
    position: absolute;
    left: -20px;
    top: 6px;
    width: 11px;
    height: 11px;
    line-height: 8px;
    font-size: 11px;
    text-align: center;
    color: #555;
    background: #fff;
    border: 1px solid #a0a0a0;
    z-index: 1;
  }
  &:not(:last-child)::after {
    content: '';
    position: absolute;
    left: -15px;
    top: 11px;
    height: 100%;
    border-left: 1px solid #b8b8b8;
  }
`;

const Leaf = styled.li<{ $on?: boolean }>`
  position: relative;
  height: 22px;
  &::before {
    content: '';
    position: absolute;
    left: -14px;
    top: 0;
    width: 12px;
    height: 12px;
    border-left: 1px solid #c4c4c4;
    border-bottom: 1px solid #c4c4c4;
  }
  &:not(:last-child)::after {
    content: '';
    position: absolute;
    left: -14px;
    top: 11px;
    height: 12px;
    border-left: 1px solid #c4c4c4;
  }
  span {
    display: inline-block;
    height: 22px;
    ${(p) => p.$on && css`background: #0c6cbd; color: #fff; outline: 1px dotted #333; outline-offset: -1px;`}
  }
`;

const tree: [string, string[]][] = [
  ['Board Stackup', ['Board Editor Layers', 'Physical Stackup', 'Board Finish', 'Solder Mask/Paste']],
  ['Text & Graphics', ['Defaults', 'Formatting', 'Text Variables']],
  ['Design Rules', ['Constraints', 'Pre-defined Sizes', 'Teardrops', 'Length-tuning Patterns', 'Net Classes', 'Custom Rules', 'Violation Severity']],
  ['Board Data', ['Embedded Files']],
];

const Page = styled.div`
  flex: 1;
  min-width: 0;
  display: flex;
  overflow: hidden;
`;

const LeftColumn = styled.div`
  width: 416px;
  margin-left: 11px;
  flex: none;
  display: flex;
  flex-direction: column;
`;

const RightColumn = styled.div`
  width: 369px;
  margin-left: 43px;
  flex: none;
  display: flex;
  flex-direction: column;
`;

const SectionTitle = styled.h3<{ $inset?: number; $top?: number }>`
  margin: ${(p) => p.$top ?? 0}px 0 0;
  padding-left: ${(p) => p.$inset ?? 0}px;
  font-size: 14px;
  font-weight: 400;
  height: 20px;
  flex: none;
`;

const Rule = styled.hr<{ $top: number }>`
  margin: ${(p) => p.$top}px 0 0;
  width: 100%;
  height: 1px;
  border: 0;
  flex: none;
  background: #9a9a9a;
`;

const ValueRow = styled.div`
  height: 38px;
  flex: none;
  display: grid;
  grid-template-columns: 72px 192px 116px 1fr;
  align-items: center;
  svg { margin-left: 18px; }
`;

const Field = styled.input<{ $width?: number }>`
  width: ${(p) => p.$width ?? 116}px;
  height: 28px;
  border: 0;
  border-bottom: 1px solid #7c7c7c;
  padding: 0 5px;
  background: #fff;
  outline: 0;
`;

const Unit = styled.span`
  margin-left: 7px;
`;

type Value = [string, string, string];
const copper: Value[] = [
  ['clearance', 'Minimum clearance:', '0.4'],
  ['trackw', 'Minimum track width:', '0.4'],
  ['connw', 'Minimum connection width:', '0.4'],
  ['annular', 'Minimum annular width:', '0.3'],
  ['viadia', 'Minimum via diameter:', '0.5'],
  ['cuhole', 'Copper to hole clearance:', '0.4'],
  ['cuedge', 'Copper to edge clearance:', '0.5'],
];
const holes: Value[] = [
  ['hole', 'Minimum through hole:', '0.3'],
  ['holehole', 'Hole to hole clearance:', '0.25'],
];
const uvias: Value[] = [
  ['viadia', 'Minimum uVia diameter:', '0.2'],
  ['hole', 'Minimum uVia hole:', '0.1'],
];

const Values = ({ rows }: { rows: Value[] }) => (
  <>
    {rows.map(([icon, label, value]) => {
      const id = label.replace(/\W+/g, '-').toLowerCase();
      return (
        <ValueRow key={id}>
          <Icon name={icon} size={33} />
          <label htmlFor={id}>{label}</label>
          <Field id={id} defaultValue={value} />
          <Unit>mm</Unit>
        </ValueRow>
      );
    })}
  </>
);

const Line = styled.div<{ $height: number; $indent?: number }>`
  height: ${(p) => p.$height}px;
  padding-left: ${(p) => p.$indent ?? 0}px;
  flex: none;
  display: flex;
  align-items: center;
  gap: 6px;
`;

const IconLine = styled(Line)`
  gap: 10px;
`;

const FieldLabel = styled.label`
  width: 192px;
`;

const Note = styled.p`
  margin: 0;
  height: 30px;
  line-height: 30px;
  font-size: 12px;
`;

const Spin = styled.div`
  display: flex;
  height: 28px;
  border-bottom: 1px solid #7c7c7c;
  background: #fff;
  input { width: 32px; border: 0; padding: 0 5px; background: transparent; outline: 0; }
  div { width: 17px; display: grid; border-left: 1px solid #ddd; border-right: 1px solid #bbb; }
  button { border: 0; padding: 0; background: #f4f4f4; display: grid; place-content: center; }
`;

const ScrollThumb = styled.div`
  width: 2px;
  height: 385px;
  margin: 22px 0 0 auto;
  background: #808080;
`;

const ScrollGap = styled.div`
  flex: 1;
  display: flex;
  padding-right: 9px;
`;

const DialogFooter = styled.div`
  height: 37px;
  flex: none;
  display: flex;
  align-items: flex-start;
  gap: 14px;
  padding: 6px 13px 0 12px;
`;

const PushButton = styled.button<{ $primary?: boolean; $wide?: boolean }>`
  height: 26px;
  min-width: ${(p) => (p.$wide ? 270 : 84)}px;
  ${(p) => p.$primary && 'min-width: 92px; margin-left: auto;'}
  padding: 0 8px;
  background: #fdfdfd;
  border: 1px solid ${(p) => (p.$primary ? '#2f7fc6' : '#dcdcdc')};
  border-radius: 4px;
`;

const BoardSetup = () => (
  <Dialog role="dialog" aria-label="Board Setup">
    <DialogTitle>
      Board Setup
      <PlainButton type="button" aria-label="Close">
        <svg width="13" height="13"><path d="M1 1l11 11M12 1 1 12" stroke="#333" strokeWidth="1.300" /></svg>
      </PlainButton>
    </DialogTitle>
    <DialogBody>
      <Tree>
        {tree.map(([name, kids]) => (
          <Branch key={name}>
            {name}
            <ul>{kids.map((k) => <Leaf key={k} $on={k === 'Constraints'}><span>{k}</span></Leaf>)}</ul>
          </Branch>
        ))}
      </Tree>
      <Page>
        <LeftColumn>
          <SectionTitle $inset={12} $top={11}>Copper</SectionTitle>
          <Line $height={4} />
          <Values rows={copper} />
          <Rule $top={26} />
          <SectionTitle $inset={16} $top={6}>Holes</SectionTitle>
          <Line $height={4} />
          <Values rows={holes} />
          <Rule $top={9} />
          <SectionTitle $inset={17} $top={7}>uVias</SectionTitle>
          <Line $height={4} />
          <Values rows={uvias} />
        </LeftColumn>
        <RightColumn>
          <SectionTitle $top={12}>Arc/Circle Approximated by Segments</SectionTitle>
          <Line $height={38} $indent={16}>
            <FieldLabel htmlFor="deviation">Maximum allowed deviation:</FieldLabel>
            <Field id="deviation" $width={118} defaultValue="0.005" />
            mm
          </Line>
          <Note>Note: zone filling can be slow when &lt; 0.005 mm.</Note>
          <Rule $top={15} />
          <SectionTitle $top={19}>Zone Fill Strategy</SectionTitle>
          <Line $height={4} />
          <IconLine $height={39}>
            <Icon name="fillet" size={32} />
            <Check text="Allow fillets/chamfers outside zone outline" gap={4} />
          </IconLine>
          <IconLine $height={39}>
            <Icon name="thermal" size={32} />
            <label htmlFor="spokes">Minimum thermal relief spoke count:</label>
            <Spin>
              <input id="spokes" defaultValue="2" />
              <div>
                <button type="button" aria-label="Increase"><svg width="7" height="5"><path d="M0 5h7L3.500 0z" fill="#333" /></svg></button>
                <button type="button" aria-label="Decrease"><svg width="7" height="5"><path d="M0 0h7L3.500 5z" fill="#333" /></svg></button>
              </div>
            </Spin>
          </IconLine>
          <Rule $top={12} />
          <SectionTitle $top={19}>Length Tuning</SectionTitle>
          <Line $height={41}>
            <Check text="Include stackup height in track length calculations" checked gap={5} />
          </Line>
        </RightColumn>
        <ScrollGap><ScrollThumb /></ScrollGap>
      </Page>
    </DialogBody>
    <DialogFooter>
      <PushButton type="button" $wide>Import Settings from Another Board...</PushButton>
      <PushButton type="button" $primary>OK</PushButton>
      <PushButton type="button">Cancel</PushButton>
    </DialogFooter>
  </Dialog>
);

const menus = ['File', 'Edit', 'View', 'Place', 'Route', 'Inspect', 'Tools', 'Preferences', 'Help'];
const stats = [['Pads', '45'], ['Vias', '0'], ['Track Segments', '89'], ['Nets', '17'], ['Unrouted', '2']];

export default function App() {
  return (
    <Window>
      <Global />
      <TitleBar>
        <svg width="20" height="20" viewBox="0 0 24 24" aria-hidden="true">
          <rect x="1" y="1" width="22" height="22" fill="#0f7a2c" />
          <path d="M5 23V8c0-4 6-3 6-7M11 23V12l6-6V1M17 14h6M1 13h3" stroke="#05270e" strokeWidth="2.400" fill="none" />
          <path d="M8 5l4 6M14 4l5 4" stroke="#2fae4a" strokeWidth="2" />
          <circle cx="18" cy="18" r="3" fill="#d9b72b" />
        </svg>
        *button xioa display — PCB Editor
        <WindowButtons>
          <PlainButton type="button" aria-label="Minimize"><svg width="14" height="14"><path d="M1 7h12" stroke="#9a9a9a" /></svg></PlainButton>
          <PlainButton type="button" aria-label="Restore"><svg width="14" height="14"><path d="M1.500 4.500h8v8h-8zM4 4V1.500h8.500V10H10" fill="none" stroke="#8a8a8a" /></svg></PlainButton>
          <PlainButton type="button" aria-label="Close"><svg width="14" height="14"><path d="M1 1l12 12M13 1 1 13" stroke="#8a8a8a" /></svg></PlainButton>
        </WindowButtons>
      </TitleBar>
      <MenuBar>
        {menus.map((m) => <PlainButton type="button" key={m}>{m}</PlainButton>)}
      </MenuBar>
      <ToolBar>
        <Tools names="new open save | pcb | page print plot | undo redo | find | refresh zin zout zfit zobj zsel | rotl rotr flipv fliph group ungroup lock unlock | fpedit fpview model | net drc | sch | console | bid tree panel" />
      </ToolBar>
      <AuxBar>
        <Select label="Track width" value="Track: use netclass width" width={189} />
        <ToggleButton type="button" aria-label="Use netclass width"><Icon name="netwidth" size={30} /></ToggleButton>
        <VSep />
        <Select label="Via size" value="Via: use netclass sizes" width={187} />
        <VSep />
        <Select label="Layer" value="Edge.Cuts" width={159} chip />
        <PairButton type="button" aria-label="Layer pair"><Icon name="layerpair" size={30} /></PairButton>
        <VSep />
        <Select label="Grid" value="0.0100 mm (0.39 mils)" width={210} />
        <VSep />
        <Select label="Zoom" value="Zoom 8.00" width={119} />
        <AuxFiller />
      </AuxBar>
      <Main>
        <SideBar $width={45}>
          <Tools vertical on={['grid', 'gridov', 'mm', 'rats', 'zone', 'contrast']} names="grid gridov polar inch mil mm cursor | angle | rats ratc | netcol highlight | zone zoneout | padskt viaskt trkskt | contrast tools" />
        </SideBar>
        <Canvas><Board /></Canvas>
        <SideBar $width={49}>
          <Tools vertical on={['select']} names="select local | fp route tune via addzone rule | line arc rect circle poly bezier image text textbox table dim del | origin ruler" />
        </SideBar>
        <Appearance />
      </Main>
      <MessagePanel>
        {stats.map(([k, v]) => <div key={k}><dt>{k}</dt><dd>{v}</dd></div>)}
      </MessagePanel>
      <StatusBar>
        <span />
        <span>Z 7.00</span>
        <span>X 132.1600  Y 72.8000</span>
        <span>dx 132.1600  dy 72.8000  dist 150.8844</span>
        <span>grid 0.0100</span>
        <span>mm</span>
        <span />
        <span />
      </StatusBar>
      <BoardSetup />
    </Window>
  );
}
